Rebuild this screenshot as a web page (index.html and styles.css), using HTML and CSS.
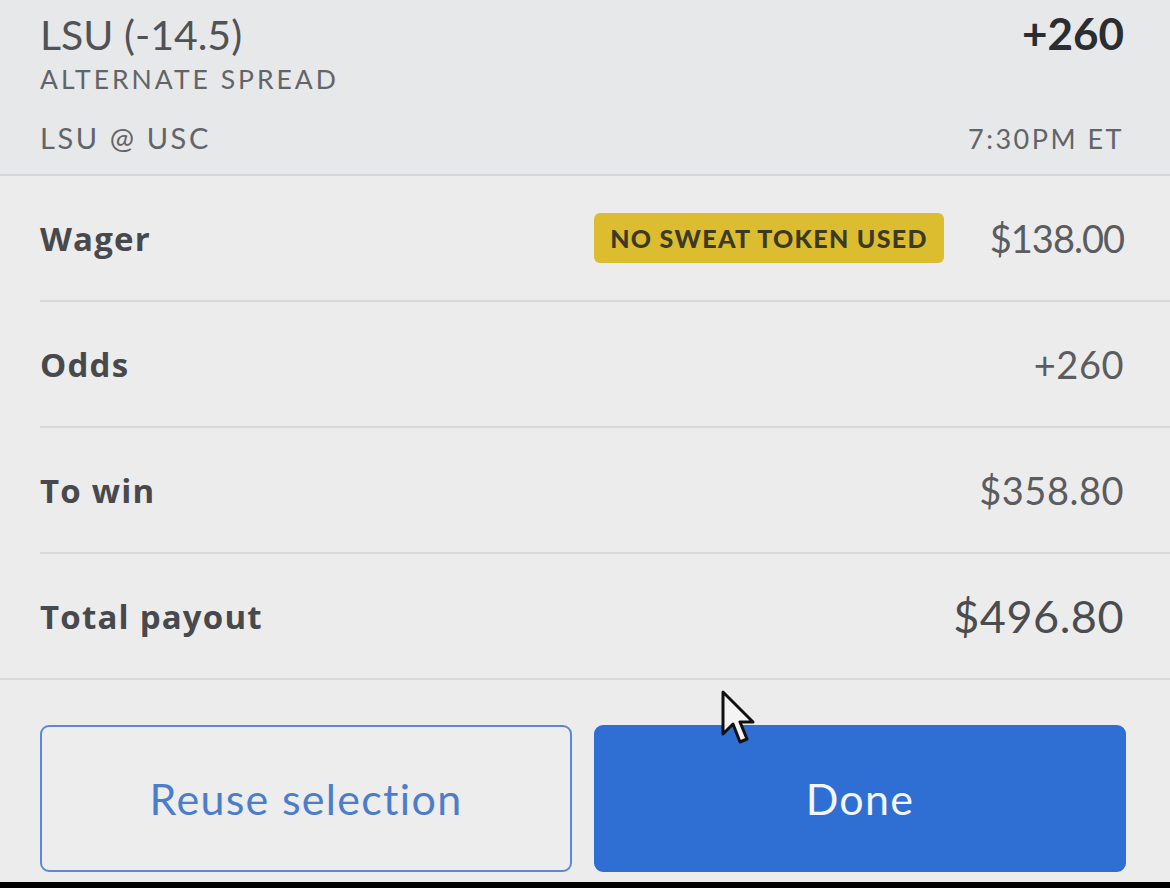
FILE: index.html
```html
<!DOCTYPE html>
<html>
<head>
<meta charset="utf-8">
<link rel="stylesheet" href="styles.css">
</head>
<body>
<div class="slip">
  <header class="bet-head">
    <div class="head-row">
      <div class="pick">LSU (-14.5)</div>
      <div class="price">+260</div>
    </div>
    <div class="market">ALTERNATE SPREAD</div>
    <div class="head-row meta">
      <div class="game">LSU @ USC</div>
      <div class="time">7:30PM ET</div>
    </div>
  </header>
  <section class="details">
    <div class="row">
      <div class="label">Wager</div>
      <div class="value-group">
        <span class="badge">NO SWEAT TOKEN USED</span>
        <span class="value tight">$138.00</span>
      </div>
    </div>
    <div class="row">
      <div class="label">Odds</div>
      <div class="value">+260</div>
    </div>
    <div class="row">
      <div class="label">To win</div>
      <div class="value">$358.80</div>
    </div>
    <div class="row last">
      <div class="label">Total payout</div>
      <div class="value total">$496.80</div>
    </div>
  </section>
  <footer class="actions">
    <button class="btn btn-outline">Reuse selection</button>
    <button class="btn btn-primary">Done</button>
    <svg class="cursor" width="36" height="58" viewBox="0 0 36 58">
      <path d="M3 2 L3 44 L13 34 L20 52 L27 49 L20 32 L33 32 Z" fill="#f4f4f4" stroke="#111" stroke-width="3" stroke-linejoin="round"/>
    </svg>
  </footer>
  <div class="bottom-bar"></div>
</div>
</body>
</html>
```
FILE: styles.css
```css
* { box-sizing: border-box; }
html, body { margin: 0; padding: 0; }
body {
  background: #ececec;
  font-family: Lato, "Open Sans", "Liberation Sans", sans-serif;
  width: 1170px;
  height: 888px;
  overflow: hidden;
}
.slip {
  display: flex;
  flex-direction: column;
  height: 888px;
}
.bet-head {
  background: #e6e8ea;
  height: 177px;
  border-bottom: 2px solid #d3d7da;
  padding: 9px 46px 0 40px;
  color: #5b5d60;
}
.head-row {
  display: flex;
  justify-content: space-between;
  align-items: baseline;
}
.pick {
  font-size: 41px;
  line-height: 48px;
  color: #505255;
}
.price {
  font-size: 44px;
  line-height: 48px;
  font-weight: 700;
  color: #2b2d30;
}
.market {
  font-size: 26.5px;
  line-height: 30px;
  letter-spacing: 3px;
  color: #626467;
  margin-top: 5px;
}
.meta { margin-top: 28px; }
.game {
  font-size: 29px;
  line-height: 32px;
  letter-spacing: 2.6px;
  color: #626467;
}
.time {
  font-size: 27px;
  line-height: 32px;
  letter-spacing: 2.5px;
  color: #626467;
  margin-right: 0;
}
.details {
  display: flex;
  flex-direction: column;
  border-bottom: 2px solid #d6d9db;
}
.row {
  margin-left: 40px;
  padding-right: 46px;
  height: 126px;
  border-bottom: 2px solid #d6d9db;
  display: flex;
  align-items: center;
  justify-content: space-between;
}
.row.last { border-bottom: none; height: 124px; }
.label {
  font-family: "Open Sans", Lato, sans-serif;
  font-size: 33px;
  font-weight: 700;
  letter-spacing: 1.2px;
  color: #47494c;
}
.value-group {
  display: flex;
  align-items: center;
  gap: 46px;
}
.value {
  font-size: 38px;
  letter-spacing: 0.5px;
  color: #5a5c5f;
}
.value.tight { letter-spacing: -1px; }
.value.total {
  font-size: 45px;
  color: #4a4c4f;
}
.badge {
  background: #dcbd2f;
  color: #3c3a25;
  font-weight: 900;
  font-size: 25px;
  line-height: 26px;
  padding: 12px 16px;
  border-radius: 6px;
  letter-spacing: 1.3px;
}
.actions {
  position: relative;
  flex: 1;
  display: flex;
  gap: 22px;
  padding: 45px 44px 10px 40px;
}
.btn {
  flex: 1;
  height: 147px;
  border-radius: 9px;
  font-family: inherit;
  font-size: 43px;
  letter-spacing: 1.3px;
}
.btn-outline {
  background: #ededed;
  border: 2px solid #5a8ad4;
  color: #4c7dcb;
}
.btn-primary {
  background: #2f6ed3;
  border: 2px solid #2f6ed3;
  color: #f2f6fc;
}
.cursor {
  position: absolute;
  left: 720px;
  top: 10px;
}
.bottom-bar {
  height: 6px;
  background: #000;
}
```
